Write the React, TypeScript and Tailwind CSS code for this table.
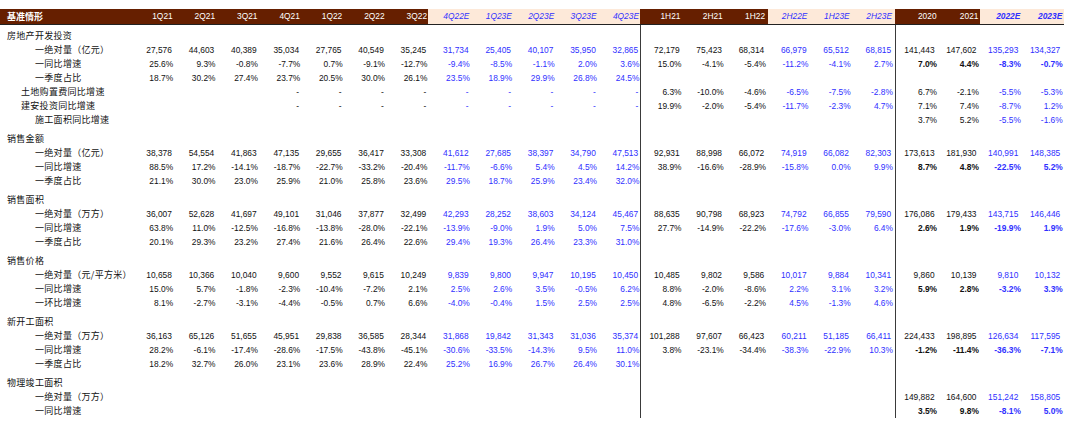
const Q_HEAD = ["1Q21", "2Q21", "3Q21", "4Q21", "1Q22", "2Q22", "3Q22", "4Q22E", "1Q23E", "2Q23E", "3Q23E", "4Q23E"];
const H_HEAD = ["1H21", "2H21", "1H22", "2H22E", "1H23E", "2H23E"];
const Y_HEAD = ["2020", "2021", "2022E", "2023E"];

type Level = "sec" | "sub" | "mid";
type DataRow = { kind: "row"; label: string; level: Level; q?: string; h?: string; y?: string; boldY?: boolean };
type Gap = { kind: "gap" };
type Row = DataRow | Gap;

// "_" marks an empty cell
const rows: Row[] = [
  { kind: "row", label: "房地产开发投资", level: "sec" },
  {
    kind: "row",
    label: "一绝对量（亿元）",
    level: "sub",
    q: "27,576 44,603 40,389 35,034 27,765 40,549 35,245 31,734 25,405 40,107 35,950 32,865",
    h: "72,179 75,423 68,314 66,979 65,512 68,815",
    y: "141,443 147,602 135,293 134,327",
  },
  {
    kind: "row",
    label: "一同比增速",
    level: "sub",
    q: "25.6% 9.3% -0.8% -7.7% 0.7% -9.1% -12.7% -9.4% -8.5% -1.1% 2.0% 3.6%",
    h: "15.0% -4.1% -5.4% -11.2% -4.1% 2.7%",
    y: "7.0% 4.4% -8.3% -0.7%",
    boldY: true,
  },
  {
    kind: "row",
    label: "一季度占比",
    level: "sub",
    q: "18.7% 30.2% 27.4% 23.7% 20.5% 30.0% 26.1% 23.5% 18.9% 29.9% 26.8% 24.5%",
  },
  {
    kind: "row",
    label: "土地购置费同比增速",
    level: "mid",
    q: "_ _ _ - - - - - - - - -",
    h: "6.3% -10.0% -4.6% -6.5% -7.5% -2.8%",
    y: "6.7% -2.1% -5.5% -5.3%",
  },
  {
    kind: "row",
    label: "建安投资同比增速",
    level: "mid",
    q: "_ _ _ - - - - - - - - -",
    h: "19.9% -2.0% -5.4% -11.7% -2.3% 4.7%",
    y: "7.1% 7.4% -8.7% 1.2%",
  },
  { kind: "row", label: "施工面积同比增速", level: "sub", y: "3.7% 5.2% -5.5% -1.6%" },
  { kind: "gap" },
  { kind: "row", label: "销售金额", level: "sec" },
  {
    kind: "row",
    label: "一绝对量（亿元）",
    level: "sub",
    q: "38,378 54,554 41,863 47,135 29,655 36,417 33,308 41,612 27,685 38,397 34,790 47,513",
    h: "92,931 88,998 66,072 74,919 66,082 82,303",
    y: "173,613 181,930 140,991 148,385",
  },
  {
    kind: "row",
    label: "一同比增速",
    level: "sub",
    q: "88.5% 17.2% -14.1% -18.7% -22.7% -33.2% -20.4% -11.7% -6.6% 5.4% 4.5% 14.2%",
    h: "38.9% -16.6% -28.9% -15.8% 0.0% 9.9%",
    y: "8.7% 4.8% -22.5% 5.2%",
    boldY: true,
  },
  {
    kind: "row",
    label: "一季度占比",
    level: "sub",
    q: "21.1% 30.0% 23.0% 25.9% 21.0% 25.8% 23.6% 29.5% 18.7% 25.9% 23.4% 32.0%",
  },
  { kind: "gap" },
  { kind: "row", label: "销售面积", level: "sec" },
  {
    kind: "row",
    label: "一绝对量（万方）",
    level: "sub",
    q: "36,007 52,628 41,697 49,101 31,046 37,877 32,499 42,293 28,252 38,603 34,124 45,467",
    h: "88,635 90,798 68,923 74,792 66,855 79,590",
    y: "176,086 179,433 143,715 146,446",
  },
  {
    kind: "row",
    label: "一同比增速",
    level: "sub",
    q: "63.8% 11.0% -12.5% -16.8% -13.8% -28.0% -22.1% -13.9% -9.0% 1.9% 5.0% 7.5%",
    h: "27.7% -14.9% -22.2% -17.6% -3.0% 6.4%",
    y: "2.6% 1.9% -19.9% 1.9%",
    boldY: true,
  },
  {
    kind: "row",
    label: "一季度占比",
    level: "sub",
    q: "20.1% 29.3% 23.2% 27.4% 21.6% 26.4% 22.6% 29.4% 19.3% 26.4% 23.3% 31.0%",
  },
  { kind: "gap" },
  { kind: "row", label: "销售价格", level: "sec" },
  {
    kind: "row",
    label: "一绝对量（元/平方米）",
    level: "sub",
    q: "10,658 10,366 10,040 9,600 9,552 9,615 10,249 9,839 9,800 9,947 10,195 10,450",
    h: "10,485 9,802 9,586 10,017 9,884 10,341",
    y: "9,860 10,139 9,810 10,132",
  },
  {
    kind: "row",
    label: "一同比增速",
    level: "sub",
    q: "15.0% 5.7% -1.8% -2.3% -10.4% -7.2% 2.1% 2.5% 2.6% 3.5% -0.5% 6.2%",
    h: "8.8% -2.0% -8.6% 2.2% 3.1% 3.2%",
    y: "5.9% 2.8% -3.2% 3.3%",
    boldY: true,
  },
  {
    kind: "row",
    label: "一环比增速",
    level: "sub",
    q: "8.1% -2.7% -3.1% -4.4% -0.5% 0.7% 6.6% -4.0% -0.4% 1.5% 2.5% 2.5%",
    h: "4.8% -6.5% -2.2% 4.5% -1.3% 4.6%",
  },
  { kind: "gap" },
  { kind: "row", label: "新开工面积", level: "sec" },
  {
    kind: "row",
    label: "一绝对量（万方）",
    level: "sub",
    q: "36,163 65,126 51,655 45,951 29,838 36,585 28,344 31,868 19,842 31,343 31,036 35,374",
    h: "101,288 97,607 66,423 60,211 51,185 66,411",
    y: "224,433 198,895 126,634 117,595",
  },
  {
    kind: "row",
    label: "一同比增速",
    level: "sub",
    q: "28.2% -6.1% -17.4% -28.6% -17.5% -43.8% -45.1% -30.6% -33.5% -14.3% 9.5% 11.0%",
    h: "3.8% -23.1% -34.4% -38.3% -22.9% 10.3%",
    y: "-1.2% -11.4% -36.3% -7.1%",
    boldY: true,
  },
  {
    kind: "row",
    label: "一季度占比",
    level: "sub",
    q: "18.2% 32.7% 26.0% 23.1% 23.6% 28.9% 22.4% 25.2% 16.9% 26.7% 26.4% 30.1%",
  },
  { kind: "gap" },
  { kind: "row", label: "物理竣工面积", level: "sec" },
  { kind: "row", label: "一绝对量（万方）", level: "sub", y: "149,882 164,600 151,242 158,805" },
  { kind: "row", label: "一同比增速", level: "sub", y: "3.5% 9.8% -8.1% 5.0%", boldY: true },
];

function split(s: string | undefined, n: number) {
  if (!s) return Array(n).fill("");
  return s.split(" ").map((v) => (v === "_" ? "" : v));
}

type Sec = "q" | "h" | "y";

const widths: Record<Sec, string> = { q: "w-[42.4px]", h: "w-[42.3px]", y: "w-[41.9px]" };
const numPad: Record<Sec, string> = { q: "pr-[2px]", h: "pr-[3.8px]", y: "pr-[3.3px]" };
const pctPad: Record<Sec, string> = { q: "pr-[0.8px]", h: "pr-[2px]", y: "pr-[0.8px]" };
const headPad: Record<Sec, string> = { q: "pr-[1.2px]", h: "pr-[3px]", y: "pr-[1.3px]" };

function Cell({ v, sec, est, bold }: { v: string; sec: Sec; est: boolean; bold?: boolean }) {
  const pad = v.endsWith("%") ? pctPad[sec] : numPad[sec];
  return (
    <div
      className={`${widths[sec]} ${pad} shrink-0 text-right whitespace-nowrap ${est ? "text-[#3030ff]" : "text-[#111]"} ${bold ? "font-bold" : ""}`}
    >
      {v}
    </div>
  );
}

function Rule({ className = "bg-[#3a3a3a]" }: { className?: string }) {
  return <div className={`w-px shrink-0 self-stretch ${className}`} />;
}

const labelPad: Record<Level, string> = { sec: "pl-[7px]", sub: "pl-[35px]", mid: "pl-[21px]" };

function DataLine({ row }: { row: DataRow }) {
  const q = split(row.q, 12);
  const h = split(row.h, 6);
  const y = split(row.y, 4);
  return (
    <div className="flex h-[14px] items-center leading-[14px]">
      <div
        className={`w-[131.5px] shrink-0 whitespace-nowrap ${labelPad[row.level]} font-['Noto_Sans_CJK_SC',sans-serif] text-[9px] tracking-[0.3px] text-[#111]`}
      >
        {row.label}
      </div>
      {q.map((v, i) => (
        <Cell key={i} v={v} sec="q" est={i >= 7} />
      ))}
      <Rule />
      {h.map((v, i) => (
        <Cell key={i} v={v} sec="h" est={i >= 3} />
      ))}
      <Rule />
      {y.map((v, i) => (
        <Cell key={i} v={v} sec="y" est={i >= 2} bold={row.boldY} />
      ))}
    </div>
  );
}

function Spacer({ h }: { h: string }) {
  return (
    <div className={`flex ${h}`}>
      <div className="w-[131.5px] shrink-0" />
      <div className="w-[508.8px] shrink-0" />
      <Rule />
      <div className="w-[253.8px] shrink-0" />
      <Rule />
    </div>
  );
}

function HeadCell({ v, sec, est }: { v: string; sec: Sec; est: boolean }) {
  const bold = sec === "y" && est;
  return (
    <div
      className={`${widths[sec]} ${headPad[sec]} shrink-0 text-right ${
        est ? "bg-[#fde9d9] italic text-[#3030ff]" : "bg-[#661f00] text-white"
      } ${bold ? "font-bold" : ""}`}
    >
      {v}
    </div>
  );
}

function Header() {
  return (
    <div className="flex h-[16px] w-[1063.7px] items-center border-b border-[#222] leading-[15px]">
      <div className="w-[131.5px] shrink-0 self-stretch bg-[#661f00] pl-[7px] font-['Noto_Sans_CJK_SC',sans-serif] text-[9px] font-bold text-white">
        基准情形
      </div>
      {Q_HEAD.map((v, i) => (
        <HeadCell key={v} v={v} sec="q" est={i >= 7} />
      ))}
      <Rule className="bg-[#661f00]" />
      {H_HEAD.map((v, i) => (
        <HeadCell key={v} v={v} sec="h" est={i >= 3} />
      ))}
      <Rule className="bg-[#661f00]" />
      {Y_HEAD.map((v, i) => (
        <HeadCell key={v} v={v} sec="y" est={i >= 2} />
      ))}
    </div>
  );
}

export default function App() {
  return (
    <div className="h-[430px] w-[1080px] overflow-hidden bg-white pt-[9px] font-['Liberation_Sans',Arial,sans-serif] text-[8.4px]">
      <Header />
      <Spacer h="h-[4px]" />
      {rows.map((r, i) => (r.kind === "gap" ? <Spacer key={i} h="h-[5px]" /> : <DataLine key={i} row={r} />))}
    </div>
  );
}
